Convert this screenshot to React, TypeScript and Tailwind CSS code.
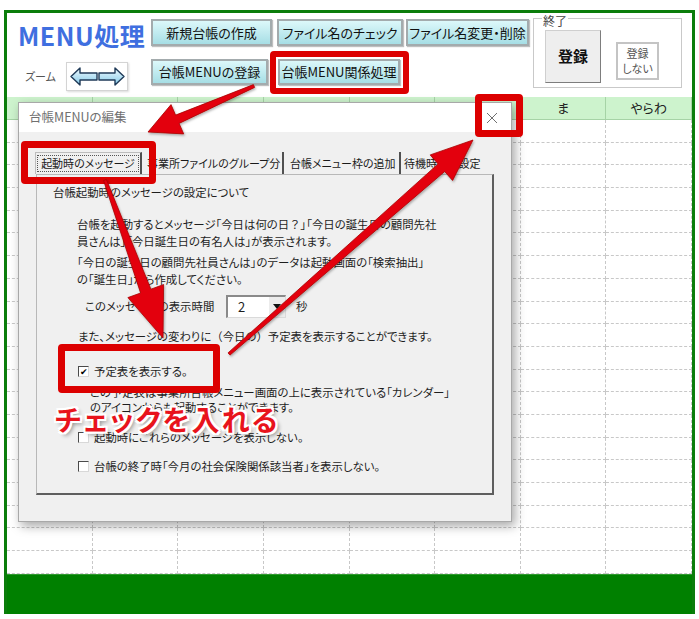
import React from 'react';

type Pt = [number, number];

// tapered arrow: thin at the tail, wide head at the tip
function arrowPoints(tail: Pt, tip: Pt, w0: number, w1: number, hl: number, hw: number) {
  const dx = tip[0] - tail[0];
  const dy = tip[1] - tail[1];
  const len = Math.hypot(dx, dy);
  const ux = dx / len;
  const uy = dy / len;
  const nx = -uy;
  const ny = ux;
  const bx = tip[0] - ux * hl;
  const by = tip[1] - uy * hl;
  const pts: Pt[] = [
    [tail[0] + nx * w0, tail[1] + ny * w0],
    [bx + nx * w1, by + ny * w1],
    [bx + nx * hw, by + ny * hw],
    tip,
    [bx - nx * hw, by - ny * hw],
    [bx - nx * w1, by - ny * w1],
    [tail[0] - nx * w0, tail[1] - ny * w0],
  ];
  return pts.map((p) => p.map((v) => v.toFixed(1)).join(',')).join(' ');
}

const CyanButton = ({ label, w }: { label: string; w: string }) => (
  <div
    className={`${w} flex items-center justify-center border-2 border-[#a3abad] bg-linear-to-b from-[#dcf8fa] to-[#a6dee5] text-[13px] text-[#111] shadow-[1px_1px_1px_rgba(0,0,0,0.25)] whitespace-nowrap`}
  >
    {label}
  </div>
);

const CheckBox = ({ checked, label }: { checked?: boolean; label: string }) => (
  <div className="flex items-center h-[17px]">
    <div className="w-[11px] h-[11px] bg-white border-t border-l border-[#4a4a4a] border-r border-b border-r-[#d8d8d8] border-b-[#d8d8d8] flex items-center justify-center text-[9px] leading-none text-black">
      {checked ? '✔' : ''}
    </div>
    <span className="ml-[5px] whitespace-nowrap">{label}</span>
  </div>
);

const columns = ['', '', '', '', '', '', 'ま', 'やらわ'];
const rows = Array.from({ length: 20 }, (_, i) => i);

const App = () => {
  return (
    <div className="relative w-[699px] h-[619px] overflow-hidden bg-white text-[#1a1a1a] font-['Noto_Sans_CJK_JP','Noto_Sans',sans-serif] [font-feature-settings:'palt']">
      {/* sheet frame */}
      <div className="ml-[4px] mt-[10px] w-[691px] border-x-[3px] border-t-[3px] border-[#0b7d0b]">
        {/* header */}
        <div className="flex h-[84px]">
          <div className="w-[144px] pl-[11px] pt-[8px]">
            <div className="text-[25px] font-bold leading-[28px] text-[#3f6fe0] tracking-[0.5px]">MENU処理</div>
            <div className="flex items-center mt-[13px]">
              <span className="ml-[7px] w-[41px] text-[11px] text-[#555]">ズーム</span>
              <div className="w-[62px] h-[29px] bg-white border border-[#d4d4d4] shadow-[1px_1px_2px_rgba(0,0,0,0.15)] flex items-center justify-center">
                <svg width="60" height="27" viewBox="0 0 60 27">
                  <defs>
                    <linearGradient id="zg" x1="0" y1="0" x2="0" y2="1">
                      <stop offset="0" stopColor="#eefaff" />
                      <stop offset="1" stopColor="#86cbea" />
                    </linearGradient>
                  </defs>
                  <polygon points="4,13.5 13,5 13,10 30,10 30,17 13,17 13,22" fill="url(#zg)" stroke="#1f3a58" strokeWidth="1.4" strokeLinejoin="round" />
                  <polygon points="57,13.5 48,5 48,10 32,10 32,17 48,17 48,22" fill="url(#zg)" stroke="#1f3a58" strokeWidth="1.4" strokeLinejoin="round" />
                </svg>
              </div>
            </div>
          </div>
          <div className="flex flex-col pt-[6px]">
            <div className="flex h-[27px]">
              <CyanButton label="新規台帳の作成" w="w-[121px]" />
              <div className="w-[5px]" />
              <CyanButton label="ファイル名のチェック" w="w-[126px]" />
              <div className="w-[3px]" />
              <CyanButton label="ファイル名変更・削除" w="w-[123px]" />
            </div>
            <div className="flex h-[26px] mt-[13px]">
              <CyanButton label="台帳MENUの登録" w="w-[117px]" />
              <div className="w-[10px]" />
              <CyanButton label="台帳MENU関係処理" w="w-[122px]" />
            </div>
          </div>
          <div className="relative ml-[4px] mt-[5px] w-[149px] h-[70px] border border-[#c9c9c9]">
            <span className="absolute -top-[5px] left-[8px] bg-white px-[1px] text-[12px] leading-[14px] text-[#444]">終了</span>
            <div className="flex items-start">
              <div className="ml-[11px] mt-[11px] w-[56px] h-[53px] bg-[#eeeeee] border border-[#cfcfcf] border-r-[#7d7d7d] border-b-[#7d7d7d] flex items-center justify-center text-[15px] font-bold text-[#111]">
                登録
              </div>
              <div className="ml-[15px] mt-[23px] w-[43px] h-[38px] bg-white border-2 border-[#c4c4c4] flex flex-col items-center justify-center text-[11px] leading-[15px] text-[#555]">
                <span>登録</span>
                <span>しない</span>
              </div>
            </div>
          </div>
        </div>

        {/* grid */}
        <div className="grid grid-cols-8">
          {columns.map((c, i) => (
            <div
              key={`h${i}`}
              className="h-[23px] bg-[#cdf3cd] border-r border-b border-[#a6d3a6] flex items-center justify-center text-[13px] text-[#222]"
            >
              {c}
            </div>
          ))}
          {rows.map((r) =>
            columns.map((_, i) => (
              <div key={`c${r}-${i}`} className="h-[22.7px] border-r border-b border-dashed border-[#c8c8c8]" />
            ))
          )}
        </div>
        <div className="h-[40px] bg-[#008000] border-t border-[#2f9a2f]" />
      </div>

      {/* dialog window */}
      <div className="absolute left-[18px] top-[102px] w-[494px] h-[420px] flex flex-col border border-[#a8a8a8] bg-[#f0f0f0] shadow-[3px_4px_10px_rgba(0,0,0,0.35)]">
        <div className="h-[29px] bg-white flex items-center justify-between pl-[10px] pr-[11px]">
          <span className="text-[12.5px] text-[#707070]">台帳MENUの編集</span>
          <svg width="16" height="16" viewBox="0 0 16 16">
            <path d="M3 3 L13 13 M13 3 L3 13" stroke="#6f6f6f" strokeWidth="1" />
          </svg>
        </div>
        <div className="flex-1 pt-[20px] pl-[16px] text-[11.4px] leading-[17px]">
          {/* tabs */}
          <div className="flex h-[22px] w-[458px] overflow-hidden text-[11px]">
            <div className="w-[107px] h-[22px] shrink-0 border-l border-t border-[#bdbdbd] border-r-2 border-r-[#505050] flex items-center justify-center">
              <span className="border border-dotted border-[#555] px-[3px] leading-[15px] whitespace-nowrap">起動時のメッセージ</span>
            </div>
            <div className="w-[142px] shrink-0 border-r-2 border-[#505050] pl-[5px] pt-[3px] whitespace-nowrap overflow-hidden">事業所ファイルのグループ分</div>
            <div className="w-[117px] shrink-0 border-r-2 border-[#505050] pl-[6px] pt-[3px] whitespace-nowrap overflow-hidden">台帳メニュー枠の追加</div>
            <div className="pl-[3px] pt-[3px] whitespace-nowrap">待機時間の設定</div>
          </div>
          {/* tab page */}
          <div className="ml-[1px] w-[458px] h-[321px] border-t border-l border-[#b8b8b8] border-r-2 border-b-2 border-r-[#5e5e5e] border-b-[#5e5e5e] flex flex-col items-start pt-[9px] text-[#1e1e1e]">
            <div className="ml-[16px]">台帳起動時のメッセージの設定について</div>
            <div className="ml-[40px] mt-[15px] whitespace-nowrap">
              <div>
                台帳を起動するとメッセージ「今日は何の日<span className="[font-feature-settings:normal]">？</span>」「今日の誕生日の顧問先社
              </div>
              <div>員さんは」「今日誕生日の有名人は」が表示されます。</div>
            </div>
            <div className="ml-[40px] mt-[4px] whitespace-nowrap">
              <div>「今日の誕生日の顧問先社員さんは」のデータは起動画面の「検索抽出」</div>
              <div>の「誕生日」から作成してください。</div>
            </div>
            <div className="ml-[48px] mt-[6px] flex items-center h-[24px]">
              <span className="w-[141px] whitespace-nowrap">このメッセージの表示時間</span>
              <div className="w-[60px] h-[23px] flex bg-white border-t-2 border-l-2 border-[#8a8a8a] border-r border-b border-r-[#dadada] border-b-[#dadada]">
                <span className="flex-1 pl-[10px] leading-[20px] text-[13px]">2</span>
                <div className="w-[16px] bg-[#ececec] flex items-center justify-center">
                  <svg width="8" height="5" viewBox="0 0 8 5">
                    <polygon points="0,0 8,0 4,5" fill="#111" />
                  </svg>
                </div>
              </div>
              <span className="ml-[10px]">秒</span>
            </div>
            <div className="ml-[41px] mt-[10px] whitespace-nowrap">
              また、メッセージの変わりに<span className="[font-feature-settings:normal]">（</span>今日の<span className="[font-feature-settings:normal]">）</span>予定表を表示することができます。
            </div>
            <div className="ml-[41px] mt-[18px]">
              <CheckBox checked label="予定表を表示する。" />
            </div>
            <div className="ml-[53px] mt-[5px] leading-[15px] whitespace-nowrap">
              <div>この予定表は事業所台帳メニュー画面の上に表示されている「カレンダー」</div>
              <div>のアイコンからも起動することができます。</div>
            </div>
            <div className="ml-[41px] mt-[14px]">
              <CheckBox label="起動時にこれらのメッセージを表示しない。" />
            </div>
            <div className="ml-[41px] mt-[12px]">
              <CheckBox label="台帳の終了時「今月の社会保険関係該当者」を表示しない。" />
            </div>
          </div>
        </div>
      </div>

      {/* annotation boxes */}
      <div className="absolute left-[270px] top-[51px] w-[139px] h-[43px] border-[6px] border-[#dc0000] rounded-[4px]" />
      <div className="absolute left-[475px] top-[94px] w-[48px] h-[43px] border-[7px] border-[#dc0000] rounded-[4px]" />
      <div className="absolute left-[21px] top-[141px] w-[135px] h-[43px] border-[7px] border-[#dc0000] rounded-[4px]" />
      <div className="absolute left-[58px] top-[344px] w-[162px] h-[49px] border-[7px] border-[#dc0000] rounded-[4px]" />

      {/* annotation arrows */}
      <svg className="absolute left-0 top-0 pointer-events-none" width="699" height="619" viewBox="0 0 699 619">
        <defs>
          <filter id="ash" x="-20%" y="-20%" width="140%" height="140%">
            <feDropShadow dx="1" dy="1.5" stdDeviation="1" floodColor="#000" floodOpacity="0.3" />
          </filter>
        </defs>
        <g fill="#e3000f" stroke="#a80000" strokeWidth="0.8" strokeLinejoin="round" filter="url(#ash)">
          <polygon points={arrowPoints([254, 86], [148, 132], 1.5, 4.5, 32, 16)} />
          <polygon points={arrowPoints([105, 180], [163, 338], 1.5, 5.5, 50, 19)} />
          <polygon points={arrowPoints([229, 354], [473, 140], 1.5, 5, 42, 17)} />
        </g>
      </svg>

      <div className="absolute left-[55px] top-[405px] text-[28px] font-bold leading-none text-[#e8131c] tracking-[2px] whitespace-nowrap [text-shadow:2px_0_#fff,-2px_0_#fff,0_2px_#fff,0_-2px_#fff,2px_2px_#fff,-2px_-2px_#fff,2px_-2px_#fff,-2px_2px_#fff,3px_3px_4px_rgba(0,0,0,0.45)]">
        チェックを入れる
      </div>
    </div>
  );
};

export default App;
